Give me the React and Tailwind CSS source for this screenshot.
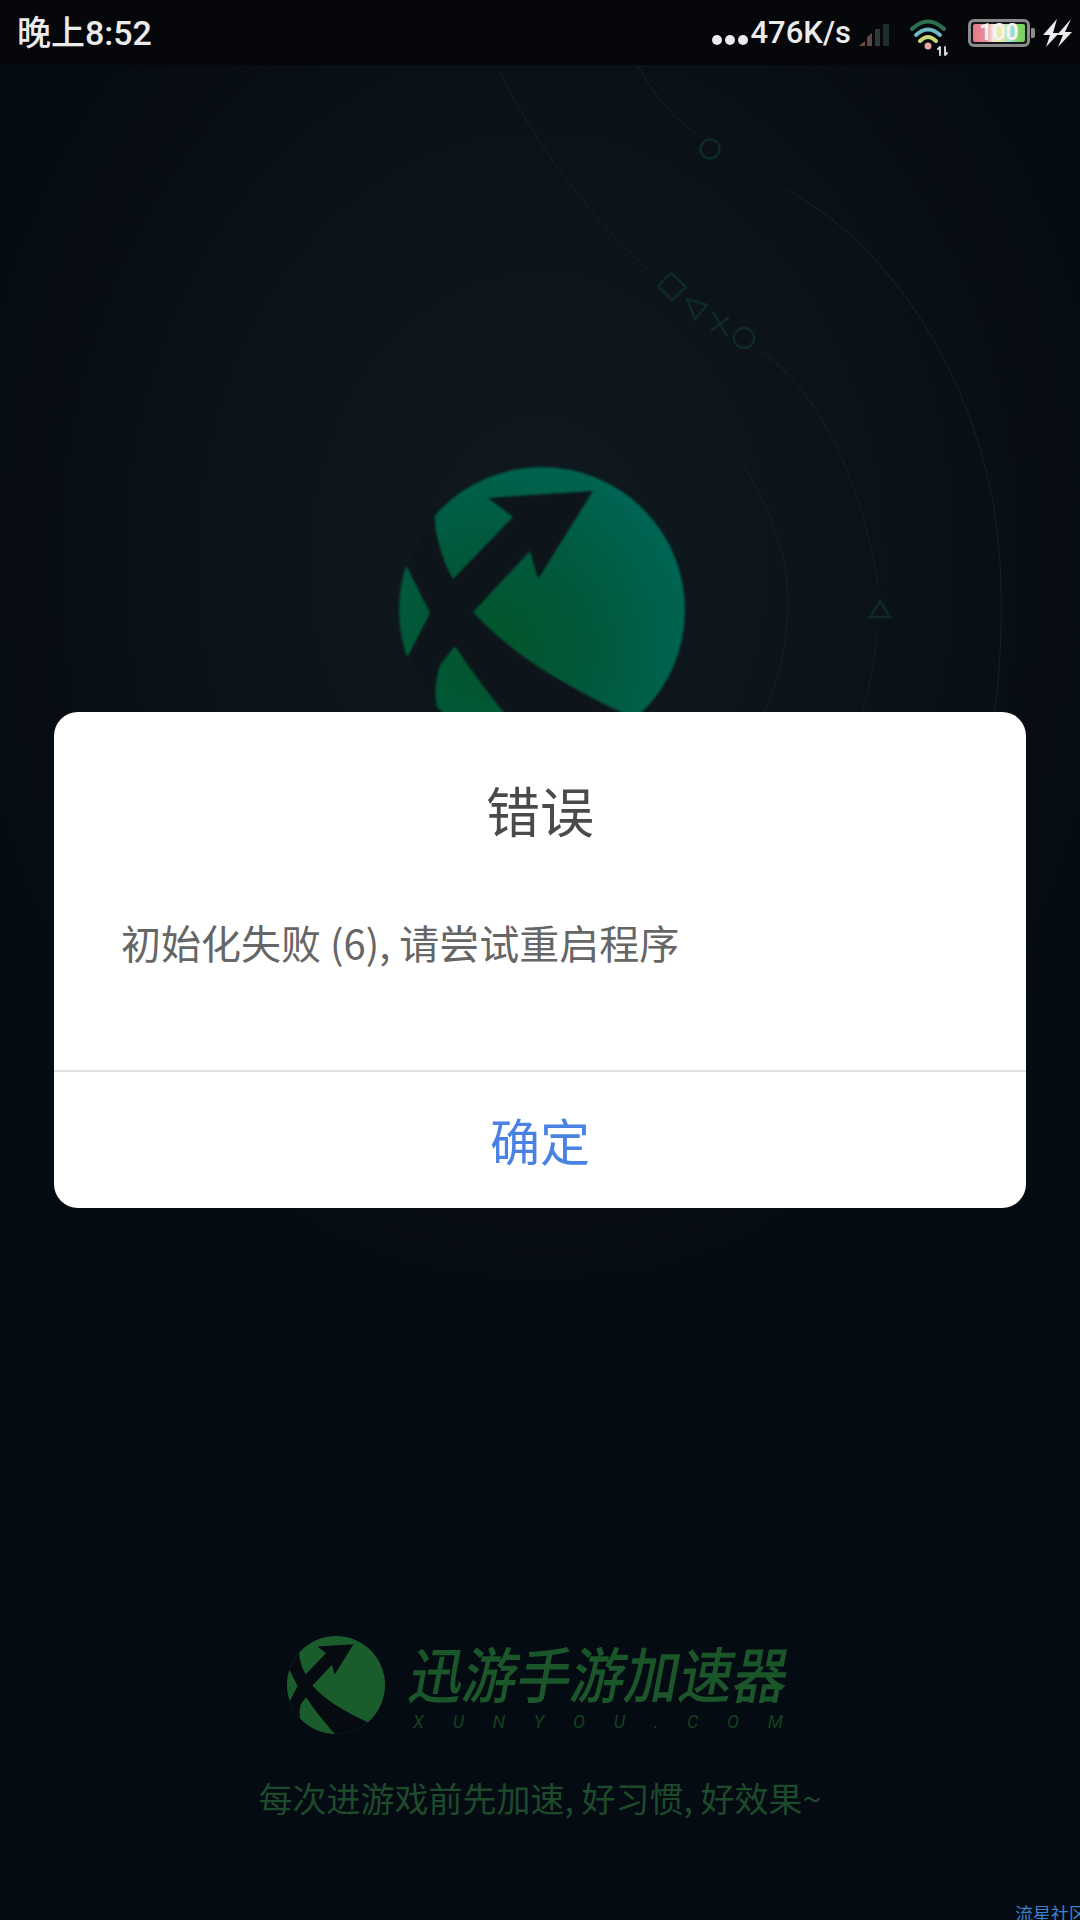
import React from "react";

const cjk = { fontFamily: '"Noto Sans CJK SC", "Noto Sans", sans-serif' };

function Logo({ size, flat, id, dark, className }) {
  // drawn in page-like coordinates centred on (542,610), r=143
  return (
    <svg width={size} height={size} viewBox="399 467 286 286" className={className}>
      <defs>
        <radialGradient id={id} gradientUnits="userSpaceOnUse" cx="490" cy="650" r="210">
          <stop offset="0" stopColor={flat || "#03562a"} />
          <stop offset="0.5" stopColor={flat || "#01593c"} />
          <stop offset="1" stopColor={flat || "#006554"} />
        </radialGradient>
        <clipPath id={id + "c"}>
          <circle cx="542" cy="610" r="143" />
        </clipPath>
      </defs>
      <g clipPath={`url(#${id}c)`}>
        <rect x="399" y="467" width="286" height="286" fill={`url(#${id})`} />
        <path
          fill={dark}
          d="M396 478 L436 507 Q433 524 438 540 Q443 562 453 579 L513 517 L488 498 L593 491 L538 579 L530 551 L473 612 Q510 652 560 680 Q600 704 650 725 L650 760 L545 760 Q490 700 455 646 L440 665 Q434 685 436 700 Q437 720 460 760 L396 760 L396 656 L408 656 L430 613 L407 567 L396 567 Z"
        />
      </g>
    </svg>
  );
}

function Signal() {
  return (
    <svg width="36" height="24" viewBox="0 0 36 24">
      <path d="M0 23l6-5v5z" fill="#6e4a4a" />
      <path d="M8 23v-9l5-4v13z" fill="#5f4848" />
      <rect x="16" y="6" width="5" height="17" fill="#2c3b38" />
      <rect x="24" y="1" width="6" height="22" fill="#1e2e2b" />
    </svg>
  );
}

function Wifi() {
  return (
    <svg width="48" height="40" viewBox="0 0 48 40" fill="none" strokeLinecap="round">
      <path d="M5 12Q21 -3 37 12" stroke="#2f6f50" strokeWidth="4" />
      <path d="M9 18Q21 7 33 18" stroke="#6cb9c2" strokeWidth="4" />
      <path d="M13 24Q21 16 29 24" stroke="#c9d777" strokeWidth="4" />
      <circle cx="21" cy="29" r="3.5" fill="#e8a6a0" />
      <path d="M33 30v8M31 32l2-2M38 30v8M38 38l2-2" stroke="#e5e5e5" strokeWidth="1.8" />
    </svg>
  );
}

function Bolt() {
  return (
    <svg width="30" height="30" viewBox="0 0 30 30" fill="#ececec">
      <path d="M15 1L1 17h7L4 29 17 15h-6z" />
      <path d="M29 1L15 17h6l-5 12 14-15h-7z" />
    </svg>
  );
}

function Battery() {
  return (
    <div className="flex items-center">
      <div className="flex h-[28px] w-[62px] rounded-[6px] border-[3px] border-[#8c8c8c] bg-[#15181a] p-[2px]">
        <div
          className="flex h-full w-full items-center justify-center rounded-[2px] bg-[linear-gradient(90deg,#e07a88_0%,#e98f98_25%,#f4e6df_38%,#e9e98f_55%,#a9e2ee_70%,#7fd86a_85%,#78d060_100%)] text-[23px] font-bold leading-none text-[#f3f3f3]"
          style={{ fontFamily: "Roboto, sans-serif" }}
        >
          100
        </div>
      </div>
      <div className="ml-[1px] h-[10px] w-[4px] rounded-r-[2px] bg-[#8c8c8c]" />
    </div>
  );
}

function StatusBar() {
  return (
    <div className="relative flex h-[65px] shrink-0 items-center bg-[#05070b] pl-[17px] pr-[8px] text-[#ebebeb]">
      <span className="text-[34px] font-medium leading-none" style={{ fontFamily: 'Roboto, "Noto Sans CJK SC", sans-serif' }}>
        晚上8:52
      </span>
      <div className="ml-auto flex items-center">
        <div className="mr-[3px] mt-[14px] flex gap-[3px]">
          <span className="h-[10px] w-[10px] rounded-full bg-[#ebebeb]" />
          <span className="h-[10px] w-[10px] rounded-full bg-[#ebebeb]" />
          <span className="h-[10px] w-[10px] rounded-full bg-[#ebebeb]" />
        </div>
        <span className="text-[31px] font-medium leading-none" style={{ fontFamily: "Roboto, sans-serif" }}>
          476K/s
        </span>
        <div className="ml-[8px] mt-[4px]"><Signal /></div>
        <div className="ml-[12px] mt-[8px]"><Wifi /></div>
        <div className="ml-[13px]"><Battery /></div>
        <div className="ml-[7px]"><Bolt /></div>
      </div>
    </div>
  );
}

function BackgroundLines() {
  return (
    <svg className="absolute left-0 top-0" width="1080" height="1920" viewBox="0 0 1080 1920" fill="none" stroke="#0e2120" strokeWidth="1.2">
      <path d="M638 66Q662 110 697 135" />
      <path d="M500 73Q560 190 650 271" />
      <path d="M763 352Q850 420 878 584" />
      <path d="M877 633Q873 680 860 720" />
      <path d="M787 190C900 250 990 400 1000 560C1003 630 1000 680 993 720" />
      <path d="M723 437Q795 530 787 620Q785 670 760 720" />
      <g stroke="#0f2a25" strokeWidth="2.5">
        <circle cx="710" cy="149" r="9.5" />
        <path d="M671 273L686 287 672 300 658 286Z" />
        <path d="M687 299L707 305 695 319Z" />
        <path d="M711 331L729 317M713 312L727 336" />
        <circle cx="744" cy="338" r="10" />
        <path d="M880 601L890 617H870Z" />
      </g>
    </svg>
  );
}

function Dialog() {
  return (
    <div className="absolute left-[54px] top-[712px] flex h-[496px] w-[972px] flex-col rounded-[24px] bg-white" style={cjk}>
      <div className="flex h-[360px] flex-col border-b-2 border-[#e0e0e0]">
        <h1 className="mt-[64px] text-center text-[54px] font-normal leading-[68px] text-[#4a4a4a]">错误</h1>
        <p className="ml-[67px] mt-[73px] text-[40px] leading-[50px] text-[#666666]">初始化失败 (6), 请尝试重启程序</p>
      </div>
      <div className="flex flex-1 items-center justify-center pb-[2px] text-[50px] leading-none text-[#4a82e4]">确定</div>
    </div>
  );
}

export default function App() {
  return (
    <div className="relative flex h-[1920px] w-[1080px] flex-col overflow-hidden bg-[radial-gradient(ellipse_640px_800px_at_540px_560px,#10191f_0%,#0c141a_45%,#080d14_80%,#050b12_100%)]">
      <BackgroundLines />
      <StatusBar />
      <div className="relative flex justify-center pl-[3px] pt-[402px]">
        <Logo size={286} id="big" dark="#0d151b" className="blur-[1px]" />
      </div>
      <div className="relative mt-auto flex flex-col items-center pb-[100px]" style={cjk}>
        <div className="flex items-center">
          <Logo size={98} id="small" flat="#1b5c2d" dark="#050b11" className="-mt-[8px]" />
          <div className="ml-[28px] flex w-[380px] flex-col">
            <span className="-ml-[8px] origin-bottom -skew-x-12 scale-y-[1.12] whitespace-nowrap text-[54px] font-medium leading-[58px] text-[#1a562a]">迅游手游加速器</span>
            <span className="mt-[8px] flex w-[370px] justify-between text-[18px] italic leading-[18px] text-[#15401f]" style={{ fontFamily: "Roboto, sans-serif" }}>
              <span>X</span><span>U</span><span>N</span><span>Y</span><span>O</span><span>U</span><span>.</span><span>C</span><span>O</span><span>M</span>
            </span>
          </div>
        </div>
        <p className="mt-[42px] text-[34px] leading-[44px] text-[#1e4a2c]">每次进游戏前先加速, 好习惯, 好效果~</p>
      </div>
      <Dialog />
      <span className="absolute left-[1015px] top-[1901px] whitespace-nowrap text-[18px] leading-[24px] text-[#3c82cc]" style={cjk}>流星社区</span>
    </div>
  );
}
